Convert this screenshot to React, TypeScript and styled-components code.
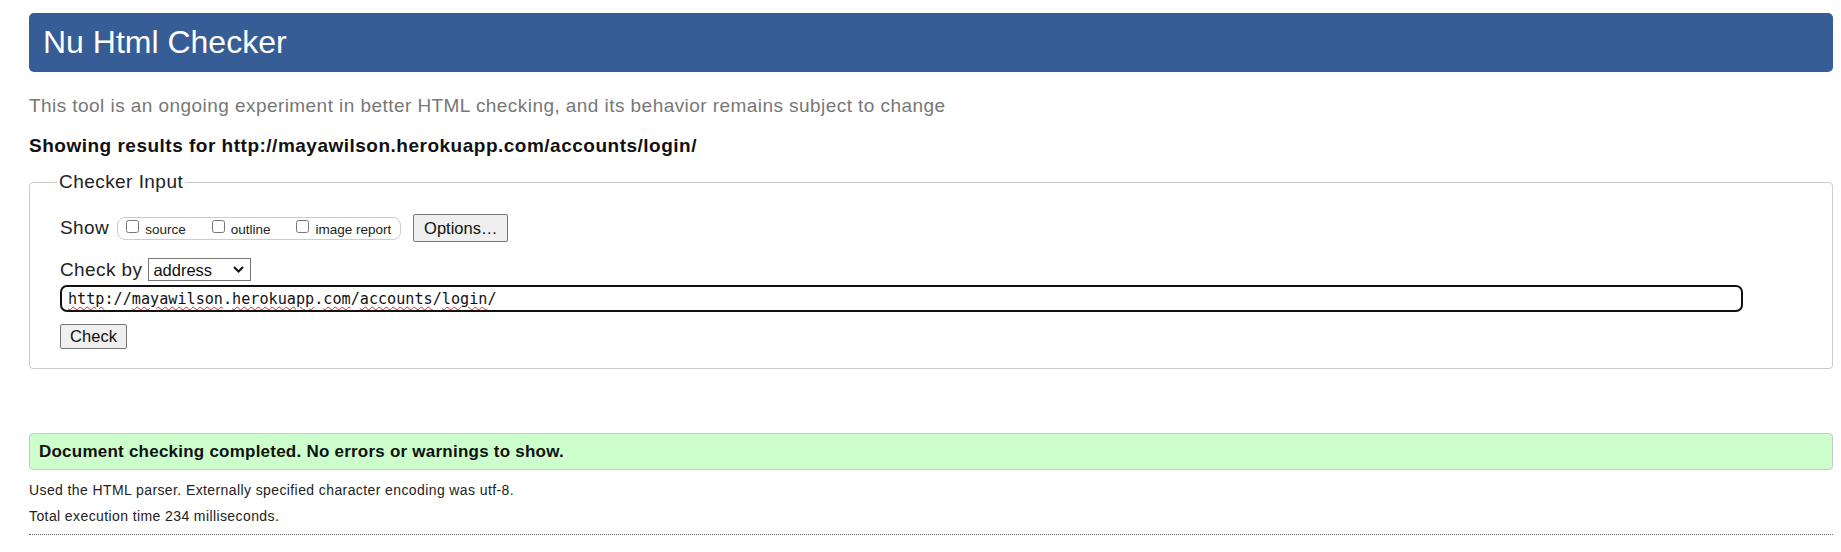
import React from "react";
import styled, { createGlobalStyle } from "styled-components";

const Global = createGlobalStyle`
  html, body { margin: 0; padding: 0; background: #fff; }
  body { font-family: Arial, "Liberation Sans", Helvetica, sans-serif; color: #222; }
`;

const Page = styled.div`
  padding: 13px 8px 0 29px;
  display: flex;
  flex-direction: column;
`;

const Header = styled.h1`
  margin: 0;
  height: 59px;
  display: flex;
  align-items: center;
  padding-left: 14px;
  background: #365d95;
  color: #fff;
  font-weight: normal;
  font-size: 32px;
  border-radius: 5px;
`;

const Intro = styled.p`
  margin: 23px 0 0;
  font-size: 19px;
  letter-spacing: 0.44px;
  line-height: 22px;
  color: #777;
`;

const Showing = styled.p`
  margin: 18px 0 0;
  font-size: 19px;
  letter-spacing: 0.5px;
  line-height: 22px;
  font-weight: bold;
  color: #111;
`;

const Fieldset = styled.fieldset`
  margin: 14px 0 0;
  padding: 0 0 19px 30px;
  border: 1px solid #ccc;
  border-radius: 4px;
  min-width: 0;
`;

const Legend = styled.legend`
  margin-left: -3px;
  padding: 0 2px;
  font-size: 19px;
  letter-spacing: 0.45px;
  line-height: 22px;
  color: #222;
`;

const Row = styled.div<{ $top: number }>`
  display: flex;
  align-items: center;
  margin-top: ${(p) => p.$top}px;
`;

const RowLabel = styled.span`
  font-size: 19px;
  letter-spacing: 0.4px;
  line-height: 22px;
  color: #222;
`;

const OptionsBox = styled.div`
  margin-left: 8px;
  height: 21px;
  display: flex;
  align-items: baseline;
  padding: 0 9px 0 4px;
  border: 1px solid #ccc;
  border-radius: 8px;
  gap: 22px;
`;

const CheckLabel = styled.label`
  display: inline-flex;
  align-items: baseline;
  font-size: 13.5px;
  line-height: 21px;
  color: #222;
  gap: 3px;

  input {
    margin: 3px 3px 3px 4px;
    width: 13px;
    height: 13px;
    position: relative;
    top: -1px;
  }
`;

const Button = styled.button<{ $w: number; $h: number }>`
  width: ${(p) => p.$w}px;
  height: ${(p) => p.$h}px;
  padding: 0;
  font-family: Arial, "Liberation Sans", sans-serif;
  font-size: 16.5px;
  color: #111;
  background: #efefef;
  border: 1px solid #767676;
  border-radius: 2px;
`;

const OptionsButton = styled(Button)`
  margin-left: 12px;
`;

const SelectWrap = styled.span`
  position: relative;
  display: inline-flex;
  margin-left: 6px;
`;

const Select = styled.select`
  appearance: none;
  width: 103px;
  height: 23px;
  font-family: Arial, "Liberation Sans", sans-serif;
  font-size: 16.5px;
  color: #111;
  background: #fff;
  border: 1px solid #767676;
  border-radius: 0;
  padding: 0 20px 0 4px;
`;

const Chevron = styled.svg`
  position: absolute;
  right: 7px;
  top: 8px;
  width: 11px;
  height: 7px;
  pointer-events: none;
`;

const UrlField = styled.div`
  margin-top: 4px;
  width: 95%;
  box-sizing: border-box;
  height: 27px;
  border: 2px solid #111;
  border-radius: 7px;
  padding: 0 6px;
  display: flex;
  align-items: center;
  font-family: "DejaVu Sans Mono", "Liberation Mono", monospace;
  font-size: 15.15px;
  color: #111;
  white-space: pre;
`;

const Misspelled = styled.span`
  text-decoration: underline wavy #e22;
  text-decoration-thickness: 1px;
  text-underline-offset: 2px;
`;

const CheckButton = styled(Button)`
  margin-top: 12px;
`;

const Success = styled.div`
  margin-top: 64px;
  height: 37px;
  box-sizing: border-box;
  display: flex;
  align-items: center;
  padding-left: 9px;
  background: #ccffcc;
  border: 1px solid #c8c8c8;
  border-radius: 4px;
  font-size: 17px;
  letter-spacing: 0.23px;
  font-weight: bold;
  color: #111;
`;

const Detail = styled.p<{ $top: number }>`
  margin: ${(p) => p.$top}px 0 0;
  font-size: 14px;
  letter-spacing: 0.4px;
  line-height: 18px;
  color: #222;
`;

const Rule = styled.hr`
  margin: 9px 0 0;
  border: 0;
  border-top: 1px dotted #666;
  height: 0;
`;

export default function App() {
  return (
    <>
      <Global />
      <Page>
        <Header>Nu Html Checker</Header>
        <Intro>
          This tool is an ongoing experiment in better HTML checking, and its behavior remains subject to change
        </Intro>
        <Showing>Showing results for http://mayawilson.herokuapp.com/accounts/login/</Showing>
        <Fieldset>
          <Legend>Checker Input</Legend>
          <Row $top={21}>
            <RowLabel>Show</RowLabel>
            <OptionsBox>
              <CheckLabel>
                <input type="checkbox" />
                source
              </CheckLabel>
              <CheckLabel>
                <input type="checkbox" />
                outline
              </CheckLabel>
              <CheckLabel>
                <input type="checkbox" />
                image report
              </CheckLabel>
            </OptionsBox>
            <OptionsButton type="button" $w={95} $h={28}>
              Options…
            </OptionsButton>
          </Row>
          <Row $top={16}>
            <RowLabel>Check by</RowLabel>
            <SelectWrap>
              <Select defaultValue="address">
                <option value="address">address</option>
                <option value="file">file upload</option>
                <option value="text">text input</option>
              </Select>
              <Chevron viewBox="0 0 11 7" aria-hidden="true">
                <path d="M1 1 L5.5 5.5 L10 1" fill="none" stroke="#111" strokeWidth="2" />
              </Chevron>
            </SelectWrap>
          </Row>
          <UrlField>
            <Misspelled>http</Misspelled>://<Misspelled>mayawilson</Misspelled>.
            <Misspelled>herokuapp</Misspelled>.<Misspelled>com</Misspelled>/<Misspelled>accounts</Misspelled>/
            <Misspelled>login</Misspelled>/
          </UrlField>
          <div>
            <CheckButton type="button" $w={67} $h={25}>
              Check
            </CheckButton>
          </div>
        </Fieldset>
        <Success>Document checking completed. No errors or warnings to show.</Success>
        <Detail $top={11}>Used the HTML parser. Externally specified character encoding was utf-8.</Detail>
        <Detail $top={8}>Total execution time 234 milliseconds.</Detail>
        <Rule />
      </Page>
    </>
  );
}
